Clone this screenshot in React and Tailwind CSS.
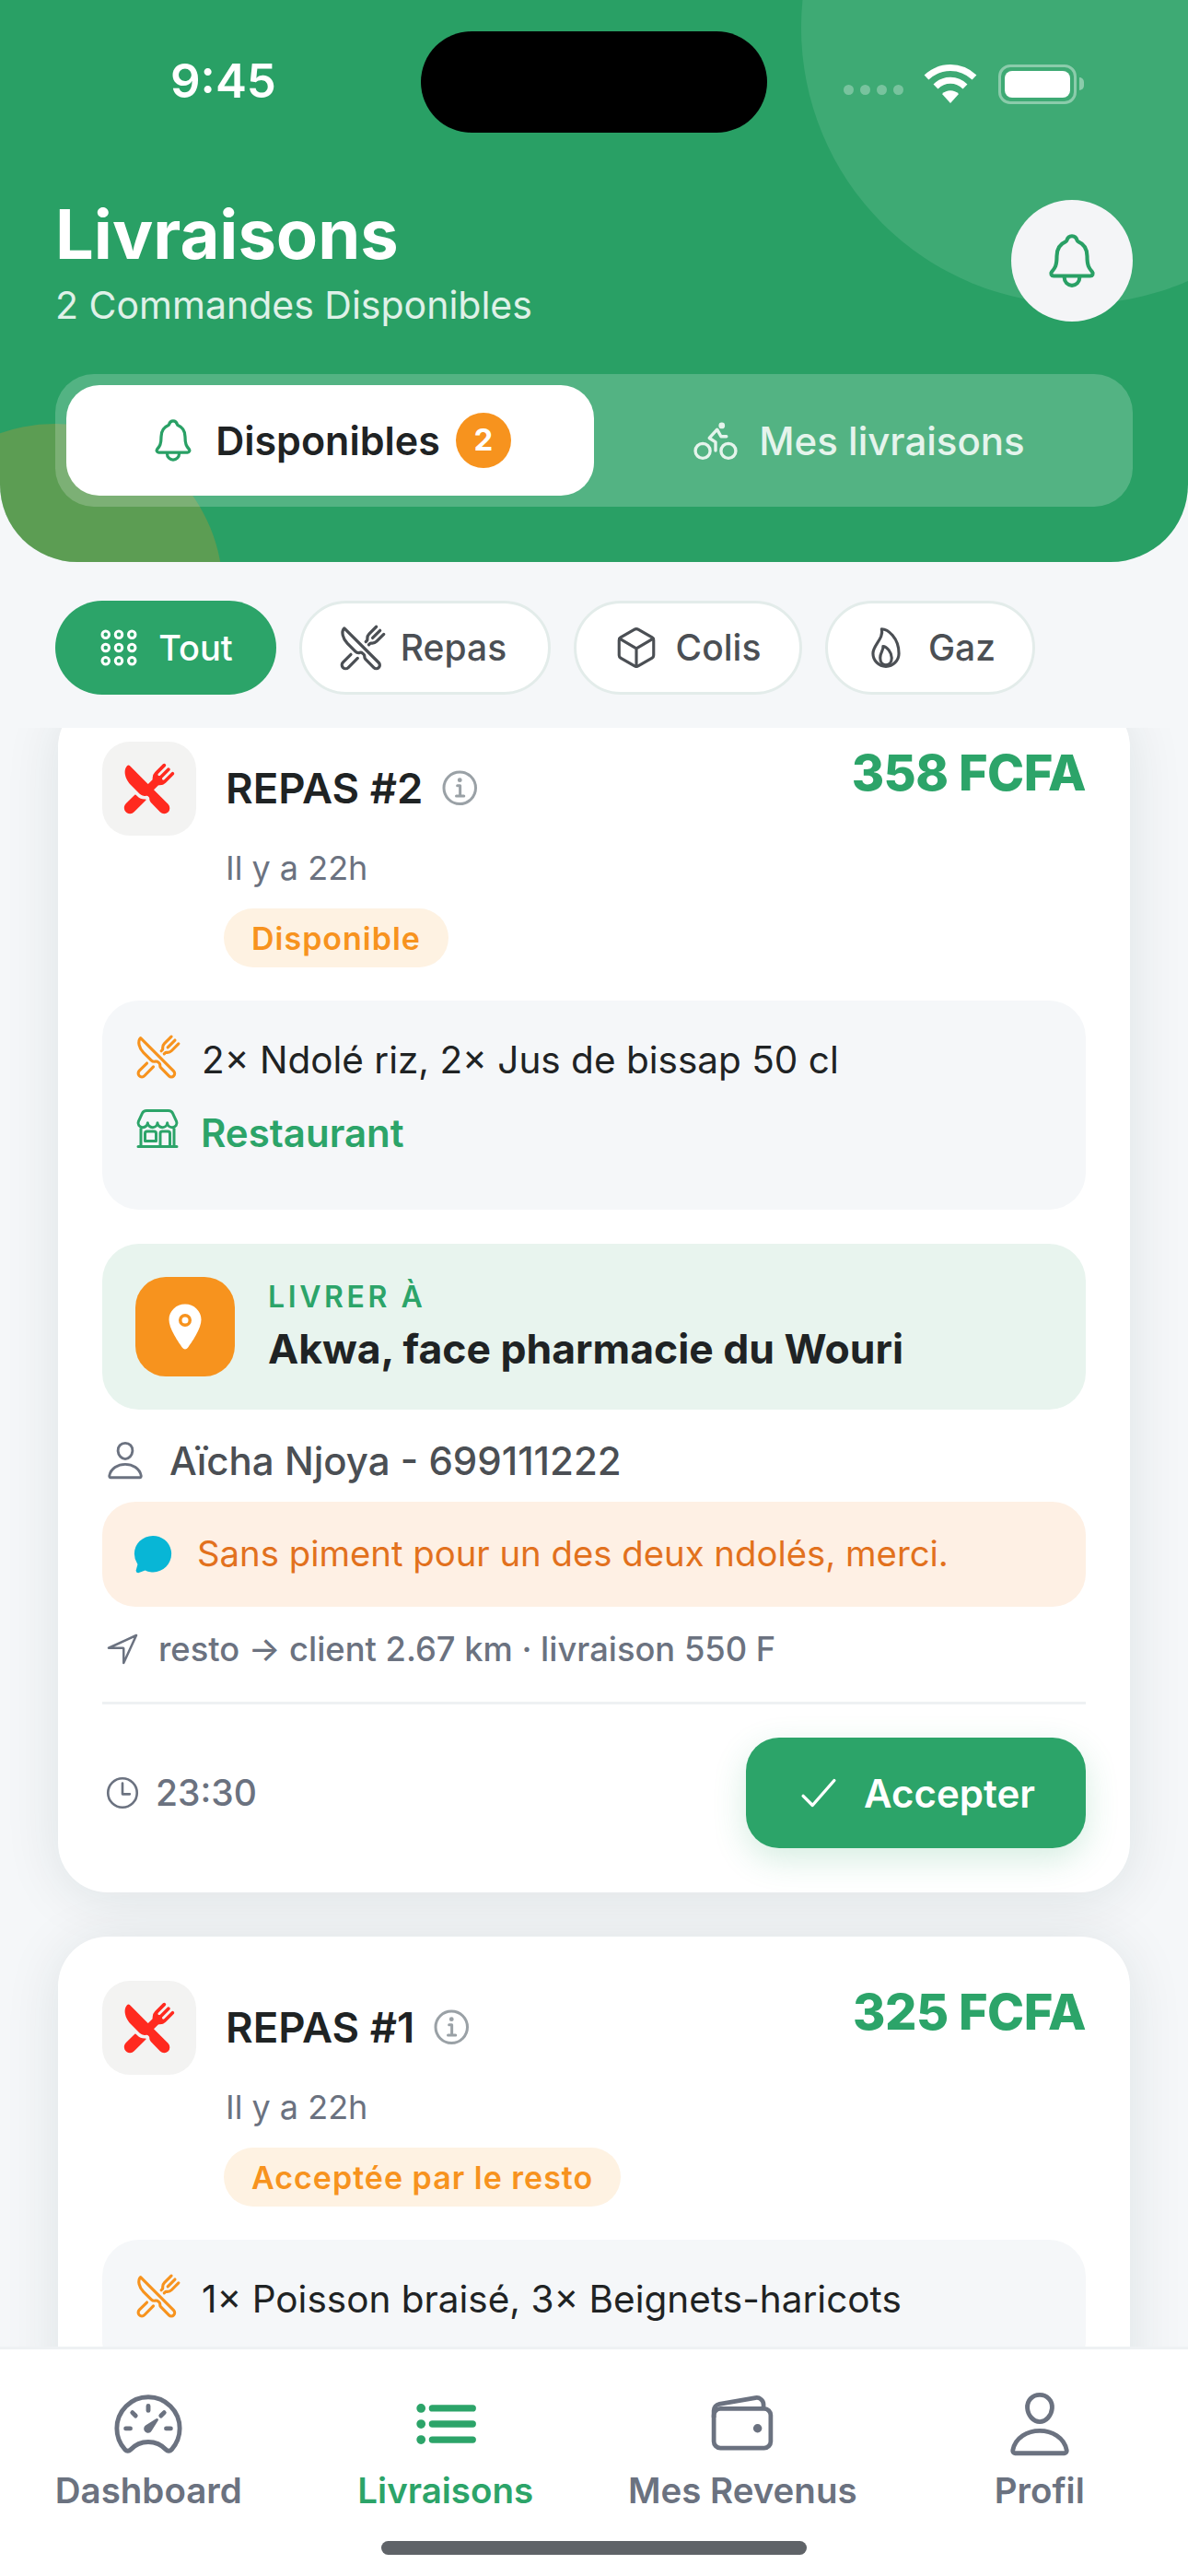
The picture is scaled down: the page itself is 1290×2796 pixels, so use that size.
import {
  IoAppsOutline,
  IoBicycleOutline,
  IoChatbubble,
  IoCheckmark,
  IoCubeOutline,
  IoFlameOutline,
  IoInformationCircleOutline,
  IoList,
  IoLocation,
  IoNavigateOutline,
  IoNotificationsOutline,
  IoPersonOutline,
  IoRestaurant,
  IoRestaurantOutline,
  IoSpeedometerOutline,
  IoStorefrontOutline,
  IoTimeOutline,
  IoWalletOutline,
} from "react-icons/io5";

const filters = [
  { label: "Repas", Icon: IoRestaurantOutline, size: 52, width: "w-[273px]", gap: "gap-[15px] pr-[5px]" },
  { label: "Colis", Icon: IoCubeOutline, size: 50, width: "w-[248px]", gap: "gap-[18px] pr-[2px]" },
  { label: "Gaz", Icon: IoFlameOutline, size: 50, width: "w-[228px]", gap: "gap-[21px] pr-[2px]" },
];

const navItems = [
  { label: "Dashboard", Icon: IoSpeedometerOutline, size: 78 },
  { label: "Livraisons", Icon: IoList, size: 78, active: true },
  { label: "Mes Revenus", Icon: IoWalletOutline, size: 76 },
  { label: "Profil", Icon: IoPersonOutline, size: 78 },
];

function StatusBar() {
  return (
    <div className="relative z-10 grid h-[110px] grid-cols-[1fr_376px_1fr] items-center">
      <span className="-mt-[4px] pl-[185px] text-[51px] font-semibold leading-none text-white">9:45</span>
      <div className="h-[110px] rounded-full bg-black" />
      <div className="flex items-start pl-[83px] pt-[4px]">
        <div className="mt-[22px] flex gap-[7px]">
          <span className="h-[11px] w-[11px] rounded-full bg-white/30" />
          <span className="h-[11px] w-[11px] rounded-full bg-white/30" />
          <span className="h-[11px] w-[11px] rounded-full bg-white/30" />
          <span className="h-[11px] w-[11px] rounded-full bg-white/30" />
        </div>
        <svg className="ml-[22px]" width="58" height="43" viewBox="0 0 58 43" fill="none">
          <path d="M3 14C18 0 40 0 55 14" stroke="white" strokeWidth="7" />
          <path d="M13 24C22 15 36 15 45 24" stroke="white" strokeWidth="7" />
          <path d="M20 32C25 27 33 27 38 32L29 42Z" fill="white" />
        </svg>
        <div className="ml-[23px] flex items-center">
          <div className="flex h-[43px] w-[85px] rounded-[13px] border-[3px] border-white/40 p-[4px]">
            <div className="flex-1 rounded-[8px] bg-white" />
          </div>
          <div className="ml-[3px] h-[14px] w-[5px] rounded-r-full bg-white/40" />
        </div>
      </div>
    </div>
  );
}

function Header() {
  return (
    <header className="relative overflow-hidden rounded-b-[84px] bg-[#29a065] px-[60px] pb-[60px] pt-[34px]">
      <div className="absolute left-[870px] top-[-270px] h-[600px] w-[600px] rounded-full bg-white/10" />
      <div className="absolute left-[-122px] top-[460px] h-[364px] w-[364px] rounded-full bg-[#f7931e]/25" />
      <div className="-mx-[60px]">
        <StatusBar />
      </div>
      <div className="relative mt-[67px] flex items-center justify-between">
        <div>
          <h1 className="text-[74px] font-bold leading-[86px] text-white">Livraisons</h1>
          <p className="mt-[10px] text-[41px] leading-[48px] text-white/85">2 Commandes Disponibles</p>
        </div>
        <button className="flex h-[132px] w-[132px] items-center justify-center rounded-full bg-[#f4f5f7] text-[#29a065]">
          <IoNotificationsOutline size={66} />
        </button>
      </div>
      <div className="relative mt-[51px] flex h-[144px] rounded-[42px] bg-white/20 p-[12px]">
        <div className="flex flex-1 items-center justify-center gap-[20px] rounded-[36px] bg-white">
          <IoNotificationsOutline size={52} className="text-[#29a065]" />
          <span className="-mr-[3px] text-[43px] font-semibold text-[#1f2324]">Disponibles</span>
          <span className="flex h-[60px] w-[60px] items-center justify-center rounded-full bg-[#f7931e] text-[33px] font-bold text-white">
            2
          </span>
        </div>
        <div className="flex flex-1 items-center justify-center gap-[20px] text-white/85">
          <IoBicycleOutline size={54} />
          <span className="text-[42px] font-medium">Mes livraisons</span>
        </div>
      </div>
    </header>
  );
}

function FilterBar() {
  return (
    <div className="relative z-10 flex h-[180px] gap-[25px] bg-[#f5f7f9] px-[60px] pt-[42px]">
      <div className="flex h-[102px] w-[240px] items-center justify-center gap-[19px] rounded-full bg-[#2ca469] pr-[2px] text-white">
        <IoAppsOutline size={48} />
        <span className="text-[38px] font-medium">Tout</span>
      </div>
      {filters.map(({ label, Icon, size, width, gap }) => (
        <div
          key={label}
          className={`flex h-[102px] ${width} ${gap} items-center justify-center rounded-full border-[3px] border-[#e3ecea] bg-white text-[#4b4f54]`}
        >
          <Icon size={size} />
          <span className="text-[39px] font-medium">{label}</span>
        </div>
      ))}
    </div>
  );
}

function OrderCard({ title, price, status, items, details }) {
  return (
    <article className="rounded-[54px] bg-white p-[48px] shadow-[0_6px_60px_rgba(20,50,50,0.1)]">
      <div className="flex gap-[32px]">
        <div className="flex h-[102px] w-[102px] shrink-0 items-center justify-center rounded-[30px] bg-[#f3f3f2] text-[#ff2a1f]">
          <IoRestaurant size={58} />
        </div>
        <div className="flex-1">
          <div className="flex justify-between">
            <div className="flex h-[102px] items-center gap-[17px]">
              <span className="text-[45.5px] font-semibold text-[#1f2324]">{title}</span>
              <IoInformationCircleOutline size={48} className="text-[#9aa1a6]" />
            </div>
            <span className="text-[54px] font-extrabold leading-[68px] tracking-[-0.5px] text-[#2ca469]">{price}</span>
          </div>
          <p className="mt-[12px] text-[36px] leading-[46px] text-[#6b7280]">Il y a 22h</p>
          <span className="mt-[21px] -ml-[2px] inline-flex h-[64px] items-center rounded-full bg-[#fef2e2] px-[30px] text-[34px] font-semibold tracking-[1px] text-[#f7931e]">
            {status}
          </span>
        </div>
      </div>

      <div className="mt-[36px] rounded-[40px] bg-[#f5f7f9] px-[36px] pb-[60px] pt-[33px]">
        <div className="flex h-[56px] items-center gap-[22px]">
          <IoRestaurantOutline size={50} className="shrink-0 text-[#f7931e]" />
          <span className="mt-[8px] text-[40.5px] text-[#1f2324]">{items}</span>
        </div>
        {details && (
          <div className="mt-[22px] flex h-[56px] items-center gap-[23px]">
            <IoStorefrontOutline size={48} className="shrink-0 text-[#2ca469]" />
            <span className="mt-[8px] text-[42px] font-semibold text-[#2ca469]">Restaurant</span>
          </div>
        )}
      </div>

      {details && (
        <>
          <div className="mt-[37px] flex items-center gap-[36px] rounded-[40px] bg-[#e8f4ee] p-[36px]">
            <div className="flex h-[108px] w-[108px] items-center justify-center rounded-[33px] bg-[#f7931e] text-white">
              <IoLocation size={56} />
            </div>
            <div>
              <p className="text-[32px] font-semibold leading-[40px] tracking-[3.6px] text-[#2ca469]">LIVRER À</p>
              <p className="mt-[8px] text-[44.5px] font-bold leading-[56px] text-[#1f2324]">{details.address}</p>
            </div>
          </div>

          <div className="mt-[25px] flex h-[60px] items-center gap-[25px] pl-[2px]">
            <IoPersonOutline size={46} className="text-[#6b7280]" />
            <span className="text-[42px] font-medium text-[#4b4f54]">{details.customer}</span>
          </div>

          <div className="mt-[15px] flex h-[114px] items-center gap-[25px] rounded-[36px] bg-[#fef0e4] px-[32px]">
            <IoChatbubble size={46} className="text-[#08b6d6]" />
            <span className="text-[38.3px] text-[#e2711d]">{details.note}</span>
          </div>

          <div className="mt-[21px] flex h-[50px] items-center gap-[19px] pl-[2px]">
            <IoNavigateOutline size={40} className="text-[#6b7280]" />
            <span className="text-[36.3px] font-medium text-[#6b7280]">{details.route}</span>
          </div>

          <div className="mt-[32px] h-[3px] bg-[#eef1f3]" />

          <div className="mt-[36px] flex items-center justify-between">
            <div className="flex items-center gap-[15px] pl-[1px] text-[#6b7280]">
              <IoTimeOutline size={42} />
              <span className="text-[39px] font-medium">{details.time}</span>
            </div>
            <button className="flex h-[120px] w-[369px] items-center justify-center gap-[22px] rounded-[36px] bg-[#2ca469] pr-[3px] text-white shadow-[0_12px_36px_rgba(44,164,105,0.2)]">
              <IoCheckmark size={54} />
              <span className="text-[42px] font-semibold">Accepter</span>
            </button>
          </div>
        </>
      )}
    </article>
  );
}

function BottomNav() {
  return (
    <nav className="h-[249px] border-t-[3px] border-[#eef1f3] bg-white pt-[45px]">
      <div className="grid grid-cols-4">
        {navItems.map(({ label, Icon, size, active }) => (
          <div key={label} className={`flex flex-col items-center ${active ? "text-[#2ca469]" : "text-[#6b7280]"}`}>
            <div className="flex h-[72px] items-center justify-center">
              <Icon size={size} />
            </div>
            <span className="mt-[12px] text-[38.5px] font-semibold leading-[48px]">{label}</span>
          </div>
        ))}
      </div>
      <div className="mx-auto mt-[31px] h-[15px] w-[462px] rounded-full bg-[#5f6368]" />
    </nav>
  );
}

export default function App() {
  return (
    <div className="flex h-[2796px] w-[1290px] flex-col overflow-hidden bg-[#f5f7f9] font-['Inter',sans-serif]">
      <Header />
      <FilterBar />
      <main className="min-h-0 flex-1 overflow-hidden px-[63px]">
        <div className="-mt-[33px] flex flex-col gap-[48px]">
          <OrderCard
            title="REPAS #2"
            price="358 FCFA"
            status="Disponible"
            items="2× Ndolé riz, 2× Jus de bissap 50 cl"
            details={{
              address: "Akwa, face pharmacie du Wouri",
              customer: "Aïcha Njoya - 699111222",
              note: "Sans piment pour un des deux ndolés, merci.",
              route: "resto → client 2.67 km · livraison 550 F",
              time: "23:30",
            }}
          />
          <OrderCard
            title="REPAS #1"
            price="325 FCFA"
            status="Acceptée par le resto"
            items="1× Poisson braisé, 3× Beignets-haricots"
          />
        </div>
      </main>
      <BottomNav />
    </div>
  );
}
